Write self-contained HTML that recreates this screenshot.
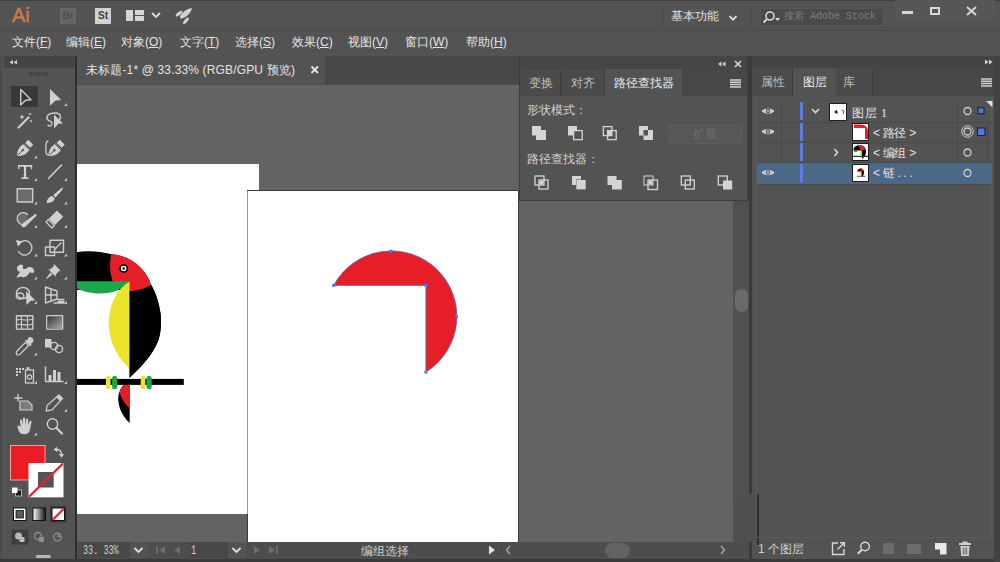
<!DOCTYPE html>
<html><head><meta charset="utf-8">
<style>
*{margin:0;padding:0;box-sizing:border-box}
html,body{width:1000px;height:562px;overflow:hidden;background:#535353;font-family:"Liberation Sans",sans-serif;color:#d6d6d6}
.a{position:absolute}
.t{position:absolute;white-space:nowrap;line-height:1}
#title{left:0;top:0;width:1000px;height:31px;background:#535353}
#menu{left:0;top:31px;width:1000px;height:25px;background:#535353}
.mi{position:absolute;top:5px;font-size:12px;line-height:1;color:#e3e3e3;white-space:nowrap}
</style></head><body>
<!-- TITLE -->
<div id="title" class="a">
  <div class="a" style="left:0;top:0;width:1000px;height:1px;background:#3e3e3e"></div>
  <div class="t" style="left:12px;top:5px;font-size:20px;color:#c97b4b;-webkit-text-stroke:0.5px #c97b4b">Ai</div>
  <div class="a" style="left:60px;top:8px;width:16px;height:16px;background:#666;color:#4e4e4e;font-size:10px;font-weight:bold;text-align:center;line-height:16px">Br</div>
  <div class="a" style="left:95px;top:8px;width:16px;height:16px;background:#d2d2d2;color:#404040;font-size:10px;font-weight:bold;text-align:center;line-height:16px">St</div>
  <div class="a" style="left:126px;top:10px;width:7px;height:11px;background:#d6d6d6"></div>
  <div class="a" style="left:135px;top:10px;width:9px;height:5px;background:#d6d6d6"></div>
  <div class="a" style="left:135px;top:16px;width:9px;height:5px;background:#d6d6d6"></div>
  <svg class="a" style="left:150px;top:11px" width="12" height="8"><path d="M2 2 L6 6 L10 2" stroke="#dcdcdc" stroke-width="1.8" fill="none"/></svg>
  <svg class="a" style="left:170px;top:4px" width="30" height="24"><path d="M22 4 C16 5 11 9 10 13 C10 14 11 15 12 14.5 C17 13 21 9 22 4Z" fill="#d2d2d2"/><ellipse cx="9" cy="9.6" rx="4" ry="1.6" transform="rotate(-40 9 9.6)" fill="#d2d2d2"/><ellipse cx="16" cy="16.8" rx="4" ry="1.6" transform="rotate(-50 16 16.8)" fill="#d2d2d2"/></svg>
  <div class="a" style="left:662px;top:4px;width:1px;height:22px;background:#484848"></div>
  <div class="t" style="left:671px;top:10px;font-size:12px;color:#e0e0e0">基本功能</div>
  <svg class="a" style="left:728px;top:14px" width="11" height="8"><path d="M1.5 2.2 L5 5.7 L8.5 2.2" stroke="#e0e0e0" stroke-width="1.8" fill="none"/></svg>
  <div class="a" style="left:750px;top:4px;width:1px;height:22px;background:#484848"></div>
  <div class="a" style="left:760px;top:8px;width:124px;height:18px;background:#4a4a4a;border:1px solid #565656"></div>
  <svg class="a" style="left:762px;top:10px" width="20" height="14"><circle cx="8" cy="6" r="4" stroke="#dcdcdc" stroke-width="1.6" fill="none"/><path d="M5 9 L1.5 12.5" stroke="#dcdcdc" stroke-width="1.8"/><path d="M13 8 L18 8 L15.5 11Z" fill="#dcdcdc"/></svg>
  <div class="t" style="left:784px;top:12px;font-size:10px;color:#7c7c7c;font-family:'Liberation Mono',monospace">搜索 Adobe Stock</div>
  <div class="a" style="left:895px;top:0px;width:27px;height:19px;background:#565656"></div>
  <div class="a" style="left:923px;top:0px;width:27px;height:19px;background:#565656"></div>
  <div class="a" style="left:951px;top:0px;width:44px;height:19px;background:#565656"></div>
  <div class="a" style="left:902px;top:11px;width:11px;height:3px;background:#d8d8d8"></div>
  <div class="a" style="left:930px;top:7px;width:10px;height:8px;border:2px solid #d8d8d8"></div>
  <svg class="a" style="left:966px;top:6px" width="11" height="10"><path d="M1 1 L10 9 M10 1 L1 9" stroke="#d8d8d8" stroke-width="1.8"/></svg>
</div>
<div class="a" style="left:0;top:30px;width:1000px;height:1px;background:#4a4a4a"></div>
<!-- MENU -->
<div id="menu" class="a">
  <span class="mi" style="left:12px">文件(<u>F</u>)</span>
  <span class="mi" style="left:66px">编辑(<u>E</u>)</span>
  <span class="mi" style="left:121px">对象(<u>O</u>)</span>
  <span class="mi" style="left:180px">文字(<u>T</u>)</span>
  <span class="mi" style="left:235px">选择(<u>S</u>)</span>
  <span class="mi" style="left:292px">效果(<u>C</u>)</span>
  <span class="mi" style="left:348px">视图(<u>V</u>)</span>
  <span class="mi" style="left:405px">窗口(<u>W</u>)</span>
  <span class="mi" style="left:466px">帮助(<u>H</u>)</span>
</div>

<!-- LEFT STRIP + TOOLBAR -->
<div class="a" style="left:0;top:56px;width:4px;height:506px;background:#4d4d4d"></div><div class="a" style="left:3px;top:56px;width:1px;height:504px;background:#595959"></div>
<div class="a" style="left:4px;top:56px;width:71px;height:504px;background:#535353"></div>
<div class="a" style="left:4px;top:56px;width:71px;height:12px;background:#444"></div>
<div class="a" style="left:0;top:559px;width:1000px;height:3px;background:#3a3a3a"></div>

<svg class="a" style="left:0;top:0" width="80" height="562" viewBox="0 0 80 562">
<g fill="none" stroke="#505050" stroke-width="1">
<path d="M12 133.5H68 M12 233.5H68 M12 309.5H68 M12 389.5H68 M12 440.5H68"/>
</g>
<!-- header -->
<path d="M13 60 L9.5 62.3 L13 64.6Z M17 60 L13.5 62.3 L17 64.6Z" fill="#d0d0d0"/>
<g stroke="#3e3e3e" stroke-width="1"><path d="M29.5 72V76 M31.5 72V76 M33.5 72V76 M35.5 72V76 M37.5 72V76 M39.5 72V76 M41.5 72V76 M43.5 72V76 M45.5 72V76 M47.5 72V76"/></g>
<rect x="11" y="86" width="27" height="21" fill="#383838"/>
<!-- indicators -->
<g fill="#c8c8c8">
<path d="M67 103 L67 106 L64 106Z"/>
<path d="M37 155.5 L37 158.5 L34 158.5Z"/>
<path d="M37 178 L37 181 L34 181Z"/><path d="M67 178 L67 181 L64 181Z"/>
<path d="M37 201.5 L37 204.5 L34 204.5Z"/><path d="M67 201.5 L67 204.5 L64 204.5Z"/>
<path d="M37 225 L37 228 L34 228Z"/><path d="M67 225 L67 228 L64 228Z"/>
<path d="M37 253.5 L37 256.5 L34 256.5Z"/><path d="M67 253.5 L67 256.5 L64 256.5Z"/>
<path d="M37 276.5 L37 279.5 L34 279.5Z"/><path d="M67 276.5 L67 279.5 L64 279.5Z"/>
<path d="M37 301 L37 304 L34 304Z"/><path d="M67 301 L67 304 L64 304Z"/>
<path d="M37 352.5 L37 355.5 L34 355.5Z"/>
<path d="M37 381 L37 384 L34 384Z"/><path d="M67 381 L67 384 L64 384Z"/>
<path d="M67 409 L67 412 L64 412Z"/>
<path d="M37 432.5 L37 435.5 L34 435.5Z"/>
</g>
<g stroke="#cdcdcd" fill="none" stroke-width="1.4" stroke-linejoin="round" stroke-linecap="round">
<!-- r1 selection -->
<path d="M20.7 89.5 L31 99.8 L25.6 100.2 L20.7 105 Z"/>
<!-- r2 magic wand -->
<path d="M18.5 127.5 L28.5 117.5" stroke-width="2.2"/>
<!-- r2 lasso -->
<path d="M57 121 C62 119 62 113 55 113 C48 113 45 117 48 120 C50 122 52 121 52 123 C52 126 49 127 48 125"/>
<!-- r3 curvature line -->
<path d="M48 141 C45 142 46 146 46 149 C45 153 47 156 50 154.5"/>
<!-- r4 line -->
<path d="M48.5 178.5 L61.5 165" stroke-width="1.7"/>
<!-- r5 rect -->
<rect x="17.2" y="188.8" width="15.5" height="13.2" fill="#6b6b6b"/>
<!-- r6 shaper circle -->
<path d="M26 224 A6 6 0 1 1 27.5 214.5" fill="#6b6b6b"/>
<!-- r7 rotate -->
<path d="M19 243.5 A7.2 7.2 0 1 1 18.5 251.5" stroke-dasharray="none"/>
<!-- r7 scale -->
<rect x="45.5" y="247" width="9" height="8.5"/>
<rect x="50" y="240.3" width="13.5" height="12"/>
<path d="M55 249 L61 243"/>
<!-- r9 shape builder -->
<ellipse cx="23" cy="293" rx="6.5" ry="5.5"/>
<ellipse cx="20" cy="296" rx="3.8" ry="3"/>
<!-- r9 perspective -->
<path d="M45.5 287 L57 291 L57 299 L45.5 303 Z M45.5 295 L57 295 M51 289 L51 301 M58 299.5 L64 299.5 M58 301.5 L64 301.5 M54 303 L64 303"/>
<!-- r10 mesh -->
<rect x="16.5" y="315.8" width="16.3" height="13.3"/>
<path d="M16.5 320 C21 318 26 322 32.8 319 M16.5 324.5 C21 323 26 327 32.8 324 M21 315.8 C23 320 20 325 22 329 M27 315.8 C29 320 26 325 28 329" stroke-width="1.1"/>
<!-- r10 gradient -->
<rect x="46.8" y="315.8" width="15.8" height="13.3"/>
<!-- r11 blend -->
<circle cx="54" cy="346" r="3.6"/><circle cx="59" cy="349" r="3.6"/>
<!-- r12 graph -->
<path d="M45.5 367 L45.5 381.5 L63 381.5"/>
<!-- r13 artboard -->
<path d="M15 398 L22 398 M18 394.5 L18 401"/>
<!-- r14 zoom -->
<circle cx="52.5" cy="424" r="5.2"/>
<path d="M56.5 428 L62 433.5" stroke-width="2.2"/>
</g>
<g fill="#d0d0d0">
<!-- r1 direct selection -->
<path d="M50 89 L61.2 100 L55.6 100.4 L50 105.8Z"/>
<!-- wand sparkles -->
<path d="M22 114.5 L22.8 116.3 L24.5 117 L22.8 117.7 L22 119.5 L21.2 117.7 L19.5 117 L21.2 116.3Z"/>
<path d="M30 112.6 L30.6 113.6 L31.6 114 L30.6 114.4 L30 115.4 L29.4 114.4 L28.4 114 L29.4 113.6Z"/>
<path d="M31 119.6 L31.6 120.6 L32.6 121 L31.6 121.4 L31 122.4 L30.4 121.4 L29.4 121 L30.4 120.6Z"/>
<!-- lasso arrow -->
<path d="M54 114.5 L63 123.5 L58.3 123.8 L54 128.5Z"/>
<!-- r3 pen -->
<g transform="translate(0 0)"><path d="M17.2 155.8 C16.8 152 18.8 147.5 21.8 145.3 L24 143.6 L29.8 149.4 L28.2 151.6 C26 154.8 21.5 156.6 17.2 155.8Z"/>
<path d="M25.2 142.8 L28.3 139.8 L33.2 144.7 L30.2 147.8Z"/></g>
<!-- r3 curvature pen -->
<g transform="translate(31.5 0)"><path d="M17.2 155.8 C16.8 152 18.8 147.5 21.8 145.3 L24 143.6 L29.8 149.4 L28.2 151.6 C26 154.8 21.5 156.6 17.2 155.8Z"/>
<path d="M25.2 142.8 L28.3 139.8 L33.2 144.7 L30.2 147.8Z"/></g>
<!-- r4 T -->
<path d="M18 165 H32.2 V169 H30.8 V166.8 H26.1 V177.2 H28.5 V179 H21.5 V177.2 H23.9 V166.8 H19.4 V169 H18Z"/>
<!-- r5 brush -->
<path d="M63.2 187.6 C63.8 188.3 59 194 55.5 197.5 L53.2 195.3 C56.7 191.8 62.5 187 63.2 187.6Z"/>
<path d="M52.3 196 L54.8 198.5 C54 201.5 51 203 46.5 203 C47 199 49 196.8 52.3 196Z"/>
<!-- r6 pencil -->
<path d="M35.5 213.8 L37 215.3 L25 227 L21.8 227.2 L22 224Z"/>
<!-- r6 eraser -->
<path d="M57 210.6 L63.2 216.8 L55 225 L48.8 218.8Z"/>
<path d="M48.2 219.4 L54.4 225.6 L52 228 L46 222 Z" fill="none" stroke="#cdcdcd" stroke-width="1.3"/>
<!-- r7 rotate arrowhead -->
<path d="M16 240 L22.5 241.5 L18 246.5Z"/>
<!-- r8 warp -->
<path d="M18 266 C20 263.5 24 264 23 267 C22 269 25 270 27 268 C29 266 33 267 34 270 C35 273 32 274 30 272 C28 275 26 278 22 277 C20 276.5 18 277.5 16.5 278 L17 276 C19 275 18.5 273 20 272 C17 271 16 268 18 266Z"/>
<!-- r8 pin -->
<path d="M54 264 L60.5 270.5 L58.5 271.5 L55.5 275 L56 277 L48 269 L50 269.5 L53.5 266.5Z"/>
<path d="M50.5 272.5 L52.5 274.5 L46.5 279 L46 278.5Z"/>
<!-- r9 shape builder arrow -->
<path d="M26 291 L35.5 300.5 L30.8 300.8 L26.5 305Z"/>
<!-- r11 eyedropper -->
<path d="M28.5 337.5 C31 335.5 35 339.5 33 342 L30.8 344 L31.8 345 L30.5 346.3 L25 340.8 L26.3 339.5 L27.3 340.5Z"/>
<path d="M25.5 342.3 L28.7 345.5 L20.5 353.7 C19.5 354.7 17.5 355.3 16.7 354.5 C16 353.7 16.5 351.7 17.5 350.5Z" fill="none" stroke="#cdcdcd" stroke-width="1.3"/>
<!-- r11 blend square -->
<rect x="45" y="339" width="6.5" height="8.5"/>
<!-- r12 symbol sprayer dots -->
<rect x="16" y="368" width="2" height="2"/><rect x="19" y="368" width="2" height="2"/><rect x="22" y="368" width="2" height="2"/>
<rect x="16" y="371" width="2" height="2"/><rect x="19" y="371" width="2" height="2"/>
<rect x="16" y="374" width="2" height="2"/>
<rect x="26.5" y="367.2" width="3" height="2.5"/>
<!-- r12 graph bars -->
<rect x="48.5" y="375" width="3" height="6"/><rect x="53" y="370" width="3" height="11"/><rect x="57.5" y="372" width="3" height="9"/>
<!-- r13 artboard -->
<path d="M20 401 H28 L32 405 V410 H20Z" fill="#7a7a7a" stroke="#cdcdcd" stroke-width="1.2"/>
<!-- r13 slice -->
<path d="M59 395 L62.5 398.5 L52 410 L46.2 411 L47 405.5Z" fill="none" stroke="#cdcdcd" stroke-width="1.3"/>
<path d="M59 395 L62.5 398.5 L60 401 L56.5 397.5Z"/>
<!-- r14 hand -->
<path d="M22 434 C19 433 17.5 428 17.5 426 C18 425 19.5 425.5 20.5 427 L20 420.5 C20 419 22 419 22.2 420.5 L22.5 425 L23 418.5 C23.2 417 25 417 25.2 418.5 L25.5 425 L26.2 419.5 C26.5 418 28.3 418.3 28.2 419.8 L28 425.5 L29.5 421.5 C30 420.3 31.7 420.7 31.5 422 L30.2 429 C29.7 432 28 434.2 25 434.2Z"/>
</g>
<g stroke="#535353" stroke-width="1" fill="#535353"><path d="M17.8 155.2 L22.3 150.7 M49.3 155.2 L53.8 150.7"/><circle cx="22.9" cy="150.1" r="0.9"/><circle cx="54.4" cy="150.1" r="0.9"/><path d="M23.5 144 L29.3 149.8 M55 144 L60.8 149.8" stroke-width="0.9"/></g>
<!-- r12 symbol can -->
<rect x="25.5" y="370" width="8" height="13" fill="none" stroke="#cdcdcd" stroke-width="1.3"/>
<circle cx="29.5" cy="377" r="2.2" fill="none" stroke="#cdcdcd" stroke-width="1.2"/>
<!-- gradient fill -->
<defs><linearGradient id="gtool" x1="0" y1="0" x2="1" y2="1"><stop offset="0" stop-color="#3a3a3a"/><stop offset="1" stop-color="#a8a8a8"/></linearGradient>
<linearGradient id="gmode" x1="0" y1="0" x2="1" y2="0"><stop offset="0" stop-color="#ffffff"/><stop offset="1" stop-color="#111"/></linearGradient></defs>
<rect x="47.5" y="316.5" width="14.4" height="11.9" fill="url(#gtool)"/>

<!-- fill / stroke -->
<rect x="10.5" y="445.5" width="34.5" height="34.5" fill="#ec1c24" stroke="#f2a0a0" stroke-width="1"/>
<rect x="28.5" y="463" width="35" height="34.3" fill="#fff"/>
<rect x="38" y="472" width="15.7" height="15.5" fill="#535353"/>
<path d="M29 496.8 L63 463.5" stroke="#e8202a" stroke-width="2.3"/>
<path d="M56.5 449.5 Q61.5 449.5 61.5 454.5" fill="none" stroke="#cfcfcf" stroke-width="1.4"/><path d="M53.5 449.5 L57.2 446.8 L57.2 452.2Z M58.8 454 L64.2 454 L61.5 457.8Z" fill="#cfcfcf"/>
<rect x="15.5" y="490" width="6" height="6" fill="#1a1a1a" stroke="#cfcfcf" stroke-width="0.8"/>
<rect x="12" y="487.5" width="5.5" height="5.5" fill="#fff"/>
<!-- color modes -->
<rect x="13.5" y="508" width="12.5" height="12.5" fill="#fff" stroke="#111" stroke-width="1"/>
<rect x="16" y="510.5" width="7.5" height="7.5" fill="#5a5a5a" stroke="#111" stroke-width="0.8"/>
<rect x="33" y="508" width="12.5" height="12.5" fill="url(#gmode)" stroke="#111" stroke-width="1"/>
<rect x="50" y="506" width="16.5" height="16.5" fill="#3a3a3a"/>
<rect x="52" y="508" width="12.5" height="12.5" fill="#fff" stroke="#111" stroke-width="1"/>
<path d="M52.8 519.8 L63.8 508.8" stroke="#e8202a" stroke-width="2.2"/>
<!-- draw modes -->
<rect x="11.4" y="529.6" width="17" height="15" fill="#3e3e3e"/>
<g fill="#b8b8b8"><circle cx="18.5" cy="536" r="3.5"/><rect x="19.5" y="537" width="5" height="5"/></g>
<g fill="none" stroke="#8e8e8e" stroke-width="1.3"><circle cx="38" cy="536" r="3.5"/></g><rect x="39" y="537" width="5" height="5" fill="#8e8e8e"/>
<g fill="none" stroke="#8e8e8e" stroke-width="1.3"><circle cx="57.5" cy="537" r="3.8"/></g><path d="M57.5 537 L61 537 L57.5 533.5Z" fill="#8e8e8e"/>
<rect x="36.2" y="555" width="14.3" height="3" fill="#b8b8b8"/>
</svg>

<!-- CANVAS -->
<div class="a" style="left:75px;top:56px;width:2px;height:503px;background:#2e2e2e"></div>
<div class="a" style="left:77px;top:56px;width:443px;height:28px;background:#474747"></div>
<div class="a" style="left:77px;top:56px;width:248px;height:28px;background:#535353"></div>
<div class="t" style="left:86px;top:64px;font-size:12px;color:#e4e4e4;letter-spacing:0.15px">未标题-1* @ 33.33% (RGB/GPU 预览)</div>
<svg class="a" style="left:310px;top:65px" width="10" height="10"><path d="M1.5 1.5 L8 8 M8 1.5 L1.5 8" stroke="#e8e8e8" stroke-width="1.8"/></svg>
<div class="a" style="left:77px;top:84px;width:656px;height:458px;background:#636363"></div>
<div class="a" style="left:77px;top:84px;width:656px;height:1px;background:#4e4e4e"></div>

<!-- ARTBOARDS -->
<div class="a" style="left:77px;top:164px;width:182px;height:350px;background:#fff"></div>
<svg class="a" style="left:77px;top:240px" width="120" height="190" viewBox="77 240 120 190">
<!-- black head+body outer -->
<path d="M77 252.3 C85 250.5 100 250.8 111.3 254.3 C127 255 145 266 151 284.7 C155.5 292 159 302 160.6 314 C161.5 322 161 332 158.5 340 C155 348 151 358 129.6 377.8 L129.6 290 L77 290Z" fill="#000"/>
<!-- red -->
<path d="M111.3 254.3 C127 255 145 266 151 284.7 C145 289 137 291 129.4 291 C121 290 114 286 112.7 281.2 C109.5 272 109.5 262 111.3 254.3Z" fill="#e61e27"/>
<!-- green -->
<path d="M77 281.2 L129 281.2 C124 289 113 293.5 100 293.5 C90 293.5 82 291 77 288.5Z" fill="#1ca64c"/>
<!-- yellow -->
<path d="M129.5 281.5 L129.5 368.5 C118 358 109 343 108.7 323 C108.8 305 116 290 129.5 281.5Z" fill="#ebe42a"/>
<!-- body black right below red -->
<path d="M129.5 291 C137 291 145 289 151 284.7 C155.5 292 159 302 160.6 314 C161.5 322 161 332 158.5 340 C155 348 151 358 129.6 377.8Z" fill="#000"/>
<!-- eye -->
<circle cx="123.7" cy="268.5" r="4.4" fill="#000"/>
<circle cx="123.7" cy="268.5" r="2.8" fill="#fff"/>
<circle cx="123.7" cy="268.5" r="1.2" fill="#000"/>
<!-- tail -->
<path d="M129.7 379 C124 383 119.5 389 118.3 396 C117.5 406 122 416 129.7 423Z" fill="#000"/>
<path d="M129.7 379 C125 383 121 387 119.6 392 C121 398 125 404 129.7 408.5Z" fill="#e61e27"/>
<!-- perch -->
<rect x="77" y="378.9" width="106.8" height="6" fill="#000"/>
<rect x="106" y="376" width="4.6" height="13.3" rx="2" fill="#ebe42a"/>
<rect x="112.1" y="376" width="5.1" height="13.3" rx="2.2" fill="#1ca64c"/>
<rect x="140.7" y="376" width="4.6" height="13.3" rx="2" fill="#ebe42a"/>
<rect x="146.5" y="376" width="5.2" height="13.3" rx="2.2" fill="#1ca64c"/>
</svg>
<div class="a" style="left:247px;top:190px;width:272px;height:352px;background:#fff;border:1px solid #3c3c3c;border-bottom:none"></div>
<div class="a" style="left:247px;top:191px;width:1px;height:323px;background:#9a9a9a"></div>
<svg class="a" style="left:320px;top:240px" width="150" height="140" viewBox="320 240 150 140">
<path d="M333.7 285.4 A65.5 65.5 0 1 1 425.9 372.1 L425.9 285.4 Z" fill="#e61e27" stroke="#5b63c8" stroke-width="0.8"/>
<g fill="#4d7be0">
<rect x="332.2" y="283.9" width="3" height="3"/><rect x="424.4" y="283.9" width="3" height="3"/>
<rect x="389.5" y="249.7" width="3" height="3"/><rect x="455.1" y="315.3" width="3" height="3"/>
<rect x="424.4" y="370.6" width="3" height="3"/>
</g>
</svg>

<!-- SCROLLBARS -->
<div class="a" style="left:734px;top:85px;width:15px;height:457px;background:#505050"></div>
<div class="a" style="left:735px;top:289px;width:13px;height:23px;border-radius:6px;background:#6a6a6a"></div>
<!-- STATUS -->
<div class="a" style="left:77px;top:542px;width:672px;height:17px;background:#4d4d4d"></div>
<div class="a" style="left:81px;top:542px;width:49px;height:16px;background:#484848"></div>
<div class="t" style="left:83px;top:545px;font-size:12.5px;color:#d2d2d2;font-family:'Liberation Mono',monospace;transform:scaleX(0.68);transform-origin:0 0">33. 33%</div>
<div class="a" style="left:130px;top:542px;width:18px;height:16px;background:#535353"></div>
<svg class="a" style="left:133px;top:546px" width="11" height="8"><path d="M1.5 2 L5.5 6 L9.5 2" stroke="#e0e0e0" stroke-width="1.8" fill="none"/></svg>
<div class="a" style="left:189px;top:542px;width:39px;height:16px;background:#484848"></div>
<div class="t" style="left:191px;top:545px;font-size:12.5px;color:#d2d2d2;font-family:'Liberation Mono',monospace;transform:scaleX(0.68);transform-origin:0 0">1</div>
<div class="a" style="left:228px;top:542px;width:18px;height:16px;background:#535353"></div>
<svg class="a" style="left:231px;top:546px" width="11" height="8"><path d="M1.5 2 L5.5 6 L9.5 2" stroke="#e0e0e0" stroke-width="1.8" fill="none"/></svg>
<svg class="a" style="left:150px;top:542px" width="135" height="16">
<g fill="#6c6c6c"><rect x="6" y="4" width="1.8" height="8"/><path d="M15 4 L9 8 L15 12Z"/><path d="M30 4 L24 8 L30 12Z"/>
<path d="M104 4 L110 8 L104 12Z"/><path d="M119 4 L125 8 L119 12Z"/><rect x="126" y="4" width="1.8" height="8"/></g>
</svg>
<div class="t" style="left:361px;top:545px;font-size:12px;color:#cfcfcf">编组选择</div>
<svg class="a" style="left:486px;top:544px" width="12" height="12"><path d="M3 1.5 L9 6 L3 10.5Z" fill="#e0e0e0"/></svg>
<div class="a" style="left:501px;top:542px;width:1px;height:16px;background:#444"></div>
<svg class="a" style="left:503px;top:544px" width="10" height="12"><path d="M7 2 L3.5 6 L7 10" stroke="#a8a8a8" stroke-width="1.3" fill="none"/></svg>
<div class="a" style="left:605px;top:543px;width:25px;height:15px;border-radius:8px;background:#626262"></div>
<svg class="a" style="left:718px;top:544px" width="10" height="12"><path d="M3 2 L6.5 6 L3 10" stroke="#a8a8a8" stroke-width="1.3" fill="none"/></svg>

<!-- LAYERS DOCK -->
<div class="a" style="left:749px;top:56px;width:3px;height:503px;background:#3a3a3a"></div>
<div class="a" style="left:752px;top:56px;width:248px;height:503px;background:#535353"></div>
<!-- PATHFINDER PANEL -->
<div class="a" style="left:519px;top:56px;width:230px;height:145px;background:#3d3d3d"></div>
<div class="a" style="left:520px;top:56px;width:227px;height:13px;background:#464646"></div>
<svg class="a" style="left:712px;top:59px" width="36" height="10"><path d="M9.5 2.6 L6 5 L9.5 7.4Z M13.5 2.6 L10 5 L13.5 7.4Z" fill="#d0d0d0"/><path d="M23 2 L29 8 M29 2 L23 8" stroke="#d8d8d8" stroke-width="1.6"/></svg>
<div class="a" style="left:520px;top:69px;width:227px;height:27px;background:#474747"></div>
<div class="a" style="left:521px;top:70px;width:40px;height:26px;background:#4b4b4b;border-right:1px solid #3e3e3e"></div>
<div class="a" style="left:562px;top:70px;width:43px;height:26px;background:#4b4b4b;border-right:1px solid #3e3e3e"></div>
<div class="a" style="left:605px;top:69px;width:77px;height:27px;background:#535353"></div>
<div class="t" style="left:529px;top:77px;font-size:12px;color:#bdbdbd">变换</div>
<div class="t" style="left:571px;top:77px;font-size:12px;color:#bdbdbd">对齐</div>
<div class="t" style="left:614px;top:77px;font-size:12px;color:#ececec">路径查找器</div>
<svg class="a" style="left:730px;top:79px" width="11" height="9"><path d="M0 1H11 M0 3.3H11 M0 5.6H11 M0 7.9H11" stroke="#d0d0d0" stroke-width="1.5"/></svg>
<div class="a" style="left:520px;top:96px;width:227px;height:104px;background:#535353"></div>
<div class="t" style="left:527px;top:104px;font-size:12px;color:#d2d2d2;letter-spacing:0px">形状模式：</div>
<div class="t" style="left:527px;top:153px;font-size:12px;color:#d2d2d2;letter-spacing:0px">路径查找器：</div>
<div class="a" style="left:669px;top:124px;width:73px;height:20px;background:#575757;border:1px solid #5c5c5c"></div>
<div class="t" style="left:693px;top:128px;font-size:12px;color:#6f6f6f">扩展</div>
<svg class="a" style="left:520px;top:96px" width="227" height="104" viewBox="520 96 227 104">
<g fill="#d4d4d4" stroke="#d4d4d4" stroke-width="1.3">
<!-- unite -->
<path d="M532 126 H541 V130 H546 V140 H536 V135.5 H532Z" stroke="none"/>
<!-- minus front -->
<path d="M568 126 H577 V130 H573 V135.5 H568Z" stroke="none"/>
<rect x="573.6" y="130.6" width="8.6" height="9" fill="none"/>
<!-- intersect -->
<rect x="603.3" y="126.6" width="8.6" height="9" fill="none"/>
<rect x="607.6" y="130.6" width="8.6" height="9" fill="none"/>
<rect x="607.6" y="130.6" width="4.3" height="5" stroke="none"/>
<!-- exclude -->
<path d="M639 126 H648 V130 H643.5 V135.5 H639Z M648 130 H653 V140 H643.5 V135.5 H648Z" stroke="none"/>
<!-- divide -->
<rect x="535" y="176" width="9" height="9" fill="none"/>
<rect x="539" y="180" width="9" height="9" fill="none"/>
<rect x="539.5" y="180.5" width="4" height="4" stroke="none"/>
<!-- trim -->
<path d="M572 176 H581 V179.6 H576 V185 H572Z" stroke="none"/>
<rect x="576.3" y="180" width="9.4" height="9.4" stroke="none"/>
<!-- merge -->
<path d="M607.5 176 H616.5 V180 H621.8 V189.5 H612 V185 H607.5Z" stroke="none"/>
<!-- crop -->
<rect x="644" y="176" width="9" height="9" fill="none" stroke-width="1"/>
<rect x="648" y="180" width="9.5" height="9.5" fill="none"/>
<rect x="648.5" y="180.5" width="4" height="4" stroke="none"/>
<!-- outline -->
<rect x="681.3" y="176" width="9" height="9" fill="none"/>
<rect x="685.3" y="180" width="9" height="9" fill="none"/>
<!-- minus back -->
<rect x="718.3" y="176" width="9" height="9" fill="none"/>
<path d="M723 180.5 H732.2 V189.5 H723 Z" stroke="none"/>
</g>
</svg>

<!-- LAYERS PANEL CONTENT -->
<div class="a" style="left:752px;top:56px;width:248px;height:12px;background:#444"></div>
<svg class="a" style="left:980px;top:57px" width="16" height="10"><path d="M5 2.6 L8.5 5 L5 7.4Z M9 2.6 L12.5 5 L9 7.4Z" fill="#d0d0d0"/></svg>
<div class="a" style="left:752px;top:68px;width:242px;height:28px;background:#474747"></div>
<div class="a" style="left:752px;top:69px;width:41px;height:27px;background:#4b4b4b;border-right:1px solid #3e3e3e"></div>
<div class="a" style="left:793px;top:68px;width:43px;height:28px;background:#535353"></div>
<div class="a" style="left:836px;top:69px;width:37px;height:27px;background:#4b4b4b;border-right:1px solid #3e3e3e"></div>
<div class="t" style="left:761px;top:76px;font-size:12px;color:#bdbdbd">属性</div>
<div class="t" style="left:803px;top:76px;font-size:12px;color:#ececec">图层</div>
<div class="t" style="left:843px;top:76px;font-size:12px;color:#bdbdbd">库</div>
<svg class="a" style="left:981px;top:78px" width="11" height="9"><path d="M0 1H11 M0 3.3H11 M0 5.6H11 M0 7.9H11" stroke="#d0d0d0" stroke-width="1.5"/></svg>
<div class="a" style="left:994px;top:56px;width:6px;height:506px;background:#424242"></div>
<div class="a" style="left:735px;top:494px;width:22px;height:48px;background:#4f4f4f;border-top-left-radius:14px 18px"></div>
<div class="a" style="left:757px;top:494px;width:2px;height:51px;background:#2f2f2f"></div>
<!-- list frame -->
<div class="a" style="left:756px;top:97px;width:236px;height:441px;border:1px solid #5a5a5a;border-top:none"></div>
<!-- rows -->
<div class="a" style="left:757px;top:163px;width:235px;height:21px;background:#4b6886"></div>
<div class="a" style="left:757px;top:122px;width:235px;height:1px;background:#4a4a4a"></div>
<div class="a" style="left:757px;top:142px;width:235px;height:1px;background:#4a4a4a"></div>
<div class="a" style="left:757px;top:162px;width:235px;height:1px;background:#4a4a4a"></div>
<div class="a" style="left:757px;top:184px;width:235px;height:1px;background:#4a4a4a"></div>
<div class="a" style="left:781px;top:101px;width:1px;height:62px;background:#4a4a4a"></div>
<div class="a" style="left:957px;top:101px;width:1px;height:62px;background:#4a4a4a"></div><div class="a" style="left:987px;top:123px;width:1px;height:40px;background:#4a4a4a"></div>
<g></g>
<div class="a" style="left:800px;top:102px;width:3px;height:18px;background:#5b7fe0"></div>
<div class="a" style="left:800px;top:123px;width:3px;height:18px;background:#5b7fe0"></div>
<div class="a" style="left:800px;top:143px;width:3px;height:18px;background:#5b7fe0"></div>
<div class="a" style="left:800px;top:164px;width:3px;height:18px;background:#5b7fe0"></div>
<svg class="a" style="left:752px;top:96px" width="248" height="90" viewBox="752 96 248 90">
<g fill="#d0d0d0">
<path d="M761.5 111 C764 107.5 772 107.5 774.5 111 C772 114.5 764 114.5 761.5 111Z"/>
<path d="M761.5 131.5 C764 128 772 128 774.5 131.5 C772 135 764 135 761.5 131.5Z"/>
<path d="M761.5 172.5 C764 169 772 169 774.5 172.5 C772 176 764 176 761.5 172.5Z"/>
</g>
<g fill="#535353"><circle cx="768" cy="111" r="2.2"/><circle cx="768" cy="131.5" r="2.2"/></g>
<circle cx="768" cy="172.5" r="2.2" fill="#4b6886"/>
<g fill="#d0d0d0"><circle cx="768" cy="111" r="1"/><circle cx="768" cy="131.5" r="1"/><circle cx="768" cy="172.5" r="1"/></g>
<path d="M812 109 L815.5 112.5 L819 109" stroke="#d8d8d8" stroke-width="1.6" fill="none"/>
<path d="M834.5 149 L837.5 152.5 L834.5 156" stroke="#d8d8d8" stroke-width="1.6" fill="none"/>
<!-- thumbs -->
<rect x="829.5" y="103.5" width="17" height="17" fill="#fff" stroke="#1e1e1e" stroke-width="1"/>
<path d="M834 112 L837 110 L837.5 114 Z" fill="#000"/><path d="M841.5 110 L844 111 L843 114" stroke="#e61e27" stroke-width="1" fill="none"/>
<rect x="852.5" y="123.5" width="16" height="17" fill="#fff" stroke="#1e1e1e" stroke-width="1"/>
<path d="M854 124.5 L861 124.5 C865 124.5 868 127.5 868 131.5 L868 139 L865 139 L865 128 L854 128Z" fill="#e61e27"/>
<rect x="852.5" y="143.5" width="16" height="17" fill="#fff" stroke="#1e1e1e" stroke-width="1"/>
<path d="M853.5 149.5 C854 146 857.5 145 860.5 145.2 C864 145.5 866 148 866 151.5 C866 154.5 864.5 157 862 159 L861.5 150.5 L853.5 150.5Z" fill="#000"/>
<path d="M858.5 145.2 C862 145 864.8 146.5 865.6 149.5 L861.8 150.5 C860 149.5 859 147.5 858.5 145.2Z" fill="#e61e27"/>
<path d="M854 150.5 L858 150.5 C857.5 152 856 152.5 854 152Z" fill="#1ca64c"/>
<path d="M861.5 150.5 L861.5 156 C860 155 859.3 153 859.5 151Z" fill="#ebe42a"/>
<rect x="853" y="155.8" width="15" height="1.2" fill="#333"/>
<rect x="852.5" y="164.5" width="16" height="17" fill="#fff" stroke="#1e1e1e" stroke-width="1"/>
<path d="M857.5 171 C858 169 860 168.3 861.5 168.6 C863.3 169 864 170.8 864 172.5 C864 174.5 863 176 861.5 177 L861.3 171.5 L857.5 171.5Z" fill="#000"/>
<path d="M860 168.6 C862 168.5 863.3 169.5 863.7 171 L861.3 171.5 C860.8 170.5 860.2 169.5 860 168.6Z" fill="#e61e27"/>
<path d="M861.3 171.5 L861.3 175 C860.3 174.5 859.8 173 860 172Z" fill="#ebe42a"/>
<rect x="857" y="175.8" width="8.5" height="0.9" fill="#444"/>
<!-- targets -->
<g fill="none" stroke="#cfcfcf" stroke-width="1.3">
<circle cx="967.5" cy="111" r="3.5"/>
<circle cx="967.5" cy="131.5" r="3.5"/><circle cx="967.5" cy="131.5" r="5.8" stroke-width="1"/>
<circle cx="967.5" cy="152.5" r="3.5"/>
<circle cx="967.5" cy="173" r="3.5"/>
</g>
<rect x="978" y="107.8" width="6" height="6" fill="#4a7ae6" stroke="#1d1d1d" stroke-width="1"/>
<rect x="977.5" y="128" width="7.5" height="7.5" fill="#4a7ae6" stroke="#1d1d1d" stroke-width="1"/>
<path d="M986 101 L992.5 101 L992.5 107.5Z" fill="#e0e0e0"/>
</svg>
<div class="t" style="left:852px;top:106px;font-size:12px;color:#e3e3e3;letter-spacing:0.5px">图层 <span style="font-family:'Liberation Serif',serif;font-size:13px">1</span></div>
<div class="t" style="left:873px;top:127px;font-size:12px;color:#e3e3e3;letter-spacing:-0.3px">&lt; 路径 &gt;</div>
<div class="t" style="left:873px;top:147px;font-size:12px;color:#e3e3e3;letter-spacing:-0.3px">&lt; 编组 &gt;</div>
<div class="t" style="left:873px;top:167px;font-size:12px;color:#e3e3e3;letter-spacing:-0.3px">&lt; 链 . . .</div>
<!-- footer -->
<div class="t" style="left:758px;top:543px;font-size:12px;color:#cfcfcf">1 个图层</div>
<svg class="a" style="left:825px;top:538px" width="150" height="20" viewBox="825 538 150 20">
<g fill="none" stroke="#d8d8d8" stroke-width="1.4">
<path d="M838 543 H832.5 V554.5 H844 V549"/><path d="M837.5 549.5 L844 543 M840 542.8 H844.3 V547"/>
<circle cx="865" cy="546.5" r="4.3"/><path d="M861.8 549.8 L857.8 553.8" stroke-width="2"/>
</g>
<g fill="#6c6c6c"><rect x="883" y="543" width="11" height="11"/><rect x="907" y="544" width="14" height="10"/></g>
<path d="M935 543 H946.5 V554.5 H940 V549.5 H935Z" fill="#e8e8e8"/>
<g fill="#d0d0d0"><rect x="959" y="543" width="12" height="2"/><rect x="962.5" y="541.5" width="5" height="2"/><path d="M960.5 546 H969.5 L968.8 556 H961.2Z"/></g>
<g stroke="#535353" stroke-width="0.8"><path d="M963.3 547.5 V554.5 M965 547.5 V554.5 M966.7 547.5 V554.5"/></g>
</svg>

</body></html>
